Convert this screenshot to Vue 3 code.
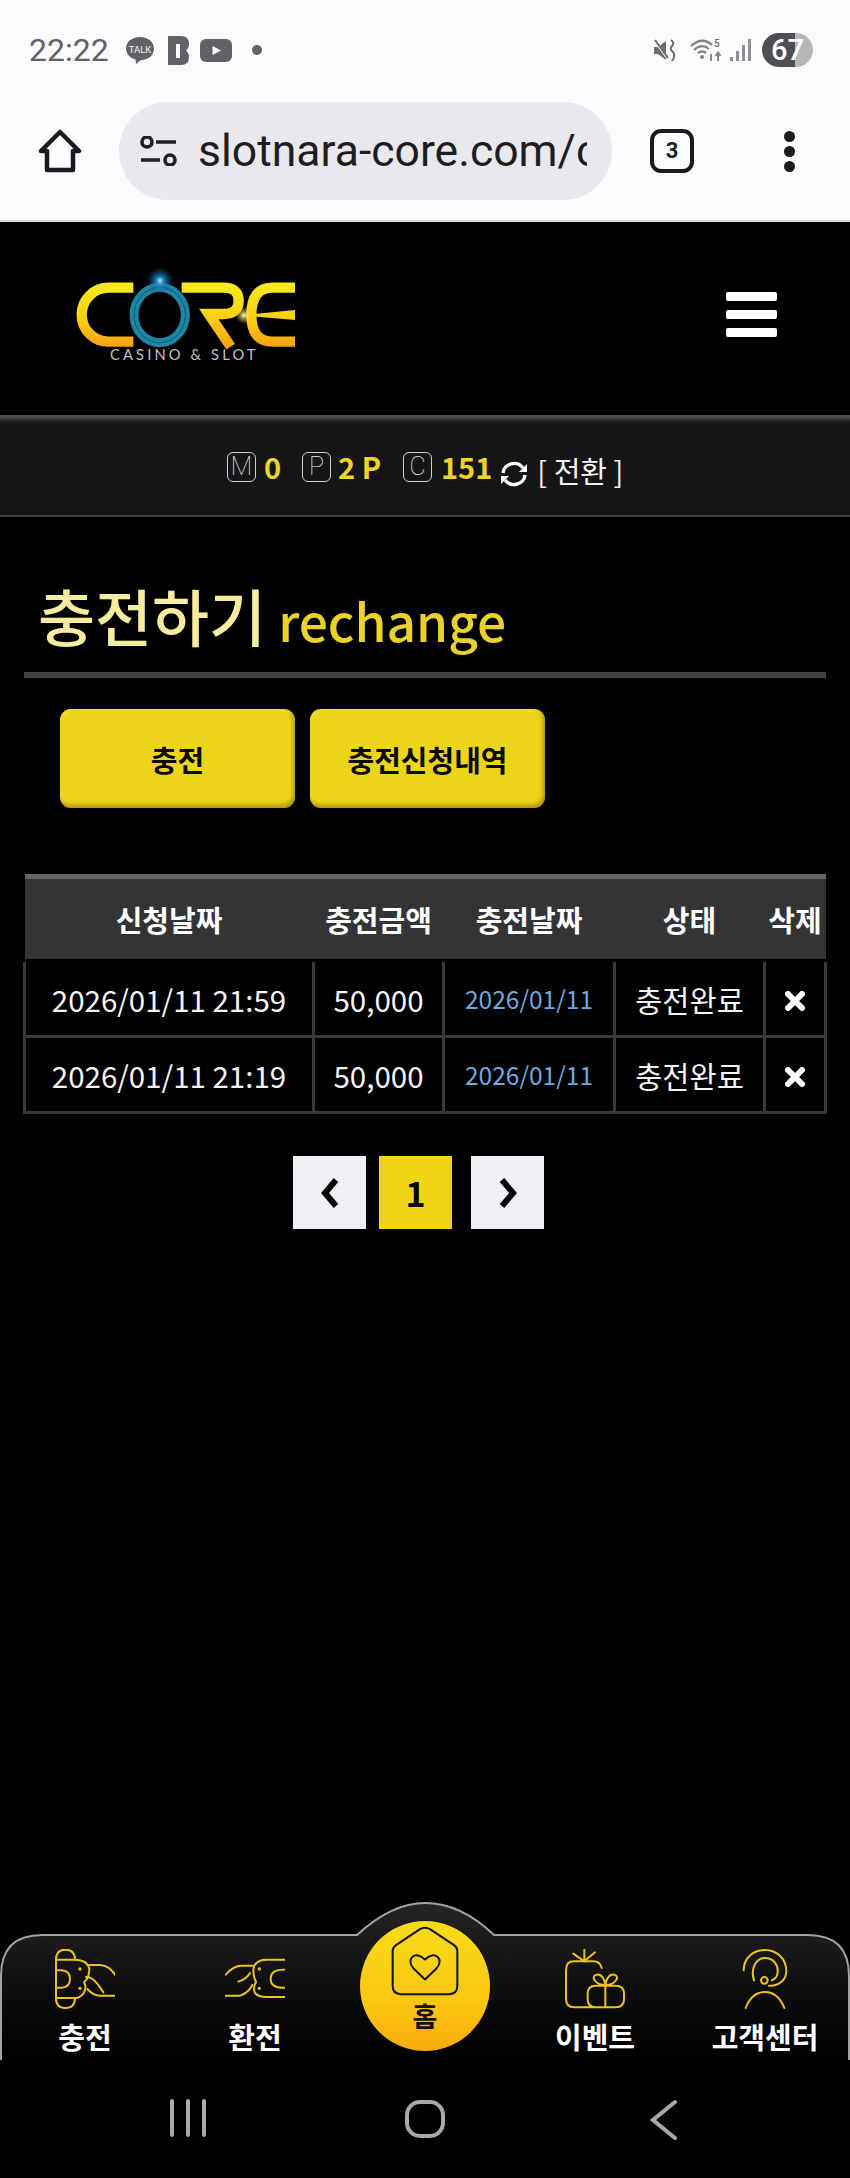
<script setup>
const rows = [
  { req: '2026/01/11 21:59', amount: '50,000', done: '2026/01/11', state: '충전완료' },
  { req: '2026/01/11 21:19', amount: '50,000', done: '2026/01/11', state: '충전완료' }
]
const heads = ['신청날짜', '충전금액', '충전날짜', '상태', '삭제']
</script>

<template>
  <div class="page">
    <div class="chrome">
      <div class="status">
        <span class="time">22:22</span>
        <svg class="st-talk" viewBox="0 0 30 30" width="30" height="30">
          <path d="M15 2C7 2 1 7 1 13.500C1 19 5 23 10.500 24.500L11 29L16 25C24 25 29 20 29 13.500C29 7 23 2 15 2Z" fill="#626266"/>
          <text x="15" y="17.500" text-anchor="middle" font-size="9.500" font-family="Roboto" fill="#f4f4f6">TALK</text>
        </svg>
        <svg class="st-b" viewBox="0 0 21 29" width="21" height="29">
          <path d="M0 0H13Q21 0 21 8Q21 12 18 14.500Q21 17 21 21Q21 29 13 29H0Z" fill="#626266"/>
          <rect x="8" y="8" width="4" height="14" fill="#fbfafd"/>
        </svg>
        <svg class="st-yt" viewBox="0 0 32 23" width="32" height="23">
          <rect width="32" height="23" rx="6" fill="#626266"/>
          <path d="M12.500 7L21 11.500L12.500 16Z" fill="#fbfafd"/>
        </svg>
        <span class="st-dot"></span>
        <span class="st-spacer"></span>
        <svg class="st-mute" viewBox="0 0 24 23" width="24" height="23">
          <path d="M1 8H5L13 2V21L5 15H1Z" fill="#6d6d71"/>
          <path d="M2 2L15 20" stroke="#fbfafd" stroke-width="2.500"/>
          <path d="M2 1L15 19" stroke="#6d6d71" stroke-width="2"/>
          <path d="M18 1Q22 4 19 7Q16 10 20 13Q23 17 19 22" stroke="#6d6d71" stroke-width="2" fill="none"/>
        </svg>
        <svg class="st-wifi" viewBox="0 0 33 24" width="33" height="24">
          <g fill="none" stroke="#818185" stroke-width="2.200">
            <path d="M1 8Q12 -2 22 7"/>
            <path d="M4 12Q12 5 19 11"/>
            <path d="M8 15Q12 12 16 15"/>
          </g>
          <circle cx="12" cy="19" r="2" fill="#818185"/>
          <text x="24" y="9" font-size="10" font-family="Roboto" font-weight="500" fill="#6d6d71">5</text>
          <path d="M21 16V23M28 23V15M25.500 18L28 14.500L30.500 18" fill="none" stroke="#8a8a8e" stroke-width="2"/>
        </svg>
        <svg class="st-signal" viewBox="0 0 22 24" width="22" height="24">
          <g fill="#8f8f93">
            <rect x="0" y="19" width="3" height="4"/>
            <rect x="6" y="13" width="3" height="10"/>
            <rect x="12" y="7" width="3" height="16"/>
            <rect x="18" y="1" width="3" height="22"/>
          </g>
        </svg>
        <span class="battery">67</span>
      </div>
      <div class="toolbar">
        <svg class="tb-home" viewBox="0 0 44 44" width="44" height="44">
          <path d="M22 3L41 22H35V41H9V22H3Z" fill="none" stroke="#1b1b1f" stroke-width="4.500" stroke-linejoin="round"/>
        </svg>
        <div class="url">
          <svg class="tune" viewBox="0 0 38 30" width="38" height="30">
            <g fill="none" stroke="#202024" stroke-width="3.600">
              <circle cx="7" cy="6" r="5"/>
              <path d="M16 6H36M1 24H20"/>
              <circle cx="30" cy="24" r="5"/>
            </g>
          </svg>
          <div class="url-text">slotnara-core.com/c</div>
        </div>
        <div class="tabs">3</div>
        <div class="dots"><i></i><i></i><i></i></div>
      </div>
    </div>

    <header class="head">
      <svg class="logo" viewBox="0 0 810 390" width="270" height="130">
        <defs>
          <linearGradient id="gold" x1="0" y1="100" x2="0" y2="290" gradientUnits="userSpaceOnUse">
            <stop offset="0" stop-color="#f8ea1e"/>
            <stop offset="0.55" stop-color="#fbcf14"/>
            <stop offset="1" stop-color="#f6a310"/>
          </linearGradient>
          <radialGradient id="flare">
            <stop offset="0" stop-color="#bff0ff"/>
            <stop offset="0.3" stop-color="#1f93d8" stop-opacity="0.8"/>
            <stop offset="1" stop-color="#0a4a88" stop-opacity="0"/>
          </radialGradient>
          <radialGradient id="spark">
            <stop offset="0" stop-color="#fff6b0"/>
            <stop offset="1" stop-color="#f8c818" stop-opacity="0"/>
          </radialGradient>
        </defs>
        <g fill="none" stroke="url(#gold)" stroke-width="31">
          <path d="M250 113H176A81 81 0 0 0 176 275H250"/>
          <path d="M395 113H520Q566 113 566 152Q566 192 520 192H476L542 290"/>
          <path d="M735 113H668Q604 113 604 195Q604 275 668 275H735"/>
        </g>
        <path d="M575 196L735 180V210Z" fill="url(#gold)"/>
        <ellipse cx="329" cy="195" rx="77" ry="83" fill="#000" stroke="#1d86a3" stroke-width="27"/>
        <ellipse cx="329" cy="195" rx="77" ry="83" fill="none" stroke="#0d4a60" stroke-width="2.500"/>
        <circle cx="330" cy="92" r="42" fill="url(#flare)"/>
        <circle cx="582" cy="196" r="26" fill="url(#spark)"/>
        <text x="403" y="331" text-anchor="middle" font-family="Lato" font-size="44" letter-spacing="9.500" fill="#c2c2c2">CASINO &amp; SLOT</text>
      </svg>
      <div class="burger"><i></i><i></i><i></i></div>
    </header>

    <div class="points">
      <span class="pbox">M</span><b class="val v0">0</b>
      <span class="pbox">P</span><b class="val v1">2 P</b>
      <span class="pbox">C</span><b class="val v2">151</b>
      <svg class="refresh" viewBox="0 0 28 26" width="28" height="26">
        <g fill="none" stroke="#fff" stroke-width="3.400">
          <path d="M3 12A11 10.500 0 0 1 23 7"/>
          <path d="M25 14A11 10.500 0 0 1 5 19"/>
        </g>
        <path d="M27 3V11H19Z" fill="#fff"/>
        <path d="M1 23V15H9Z" fill="#fff"/>
      </svg>
      <span class="swap">[ 전환 ]</span>
    </div>

    <main class="main">
      <h1 class="title">충전하기<span>rechange</span></h1>
      <div class="btns">
        <button class="btn">충전</button>
        <button class="btn">충전신청내역</button>
      </div>
      <table class="tbl">
        <colgroup>
          <col class="c1"><col class="c2"><col class="c3"><col class="c4"><col class="c5">
        </colgroup>
        <thead>
          <tr><th v-for="h in heads" :key="h">{{ h }}</th></tr>
        </thead>
        <tbody>
          <tr v-for="r in rows" :key="r.req">
            <td>{{ r.req }}</td>
            <td>{{ r.amount }}</td>
            <td class="blue">{{ r.done }}</td>
            <td>{{ r.state }}</td>
            <td>
              <svg class="x" viewBox="0 0 20 20" width="20" height="20">
                <path d="M3 3L17 17M17 3L3 17" stroke="#fff" stroke-width="6" stroke-linecap="round"/>
              </svg>
            </td>
          </tr>
        </tbody>
      </table>
      <div class="pager">
        <div class="pg">
          <svg viewBox="0 0 22 32" width="22" height="32"><path d="M17 3L6 16L17 29" fill="none" stroke="#050505" stroke-width="6"/></svg>
        </div>
        <div class="pg on">1</div>
        <div class="pg">
          <svg viewBox="0 0 22 32" width="22" height="32"><path d="M5 3L16 16L5 29" fill="none" stroke="#050505" stroke-width="6"/></svg>
        </div>
      </div>
    </main>

    <nav class="nav">
      <svg class="nav-bg" viewBox="0 0 850 160" width="850" height="160">
        <defs>
          <linearGradient id="navfill" x1="0" y1="0" x2="0" y2="1">
            <stop offset="0" stop-color="#242424"/>
            <stop offset="0.75" stop-color="#060606"/>
            <stop offset="1" stop-color="#000"/>
          </linearGradient>
        </defs>
        <path d="M1 160V76Q1 35 42 35H357C382 12 405 3 425 3C447 3 470 12 494 35H808Q849 35 849 76V160Z" fill="url(#navfill)"/>
        <path d="M1 160V76Q1 35 42 35H357C382 12 405 3 425 3C447 3 470 12 494 35H808Q849 35 849 76V160" fill="none" stroke="#a2a2a2" stroke-width="2"/>
      </svg>
      <a class="item">
        <svg viewBox="165 208 180 180" width="60" height="60" class="ico">
          <path d="M225 240Q225 210 196 210Q168 210 168 240V355Q168 385 196 385Q225 385 225 355"/>
          <path d="M168 240H225Q262 240 268 268Q268 295 252 308Q262 322 250 342Q240 355 225 355H168"/>
          <path d="M168 272H186Q210 275 210 298Q210 322 186 324H168"/>
          <path d="M262 256H300Q328 258 345 285"/>
          <path d="M258 292Q280 288 310 338"/>
          <path d="M262 328Q280 348 300 348H345"/>
          <circle cx="240" cy="268" r="5" class="dot"/>
          <circle cx="240" cy="326" r="5" class="dot"/>
        </svg>
        <span>충전</span>
      </a>
      <a class="item">
        <svg viewBox="675 208 180 180" width="60" height="60" class="ico">
          <path d="M855 240H800Q765 240 760 268Q760 292 768 306Q758 325 765 340Q775 352 800 352H855"/>
          <path d="M855 270Q812 268 812 298Q812 326 855 324"/>
          <path d="M677 285Q700 258 725 258H758"/>
          <path d="M715 306Q740 298 750 280"/>
          <path d="M677 348H720Q745 340 757 316"/>
          <circle cx="778" cy="268" r="5" class="dot"/>
          <circle cx="778" cy="326" r="5" class="dot"/>
        </svg>
        <span>환전</span>
      </a>
      <a class="item home">
        <svg viewBox="150 103 210 212" width="70" height="71" class="home-ico">
          <path d="M158 180Q158 170 168 163L240 115Q255 106 270 115L342 163Q352 170 352 180V285Q352 310 327 310H183Q158 310 158 285Z"/>
          <path d="M255 266L220 232C196 206 226 176 255 206C284 176 314 206 290 232Z"/>
        </svg>
        <span>홈</span>
      </a>
      <a class="item">
        <svg viewBox="420 208 180 180" width="60" height="60" class="ico">
          <path d="M530 265Q525 245 505 245H448Q423 245 423 270V358Q423 383 448 383H572Q597 383 597 358V342Q597 318 572 318H512Q488 318 488 342V358Q488 383 512 383"/>
          <path d="M541 318V383"/>
          <path d="M541 316C510 316 495 288 515 285C530 283 540 300 541 316C542 300 552 283 567 285C587 288 572 316 541 316Z"/>
          <path d="M478 210V245M445 222L478 245M510 218L478 245"/>
        </svg>
        <span>이벤트</span>
      </a>
      <a class="item">
        <svg viewBox="930 208 180 180" width="60" height="60" class="ico">
          <path d="M956 272C956 235 985 211 1020 211C1056 211 1084 238 1084 274C1084 302 1060 320 1032 318"/>
          <path d="M987 302C975 265 995 235 1020 235C1045 235 1060 255 1058 278C1057 290 1050 298 1040 302"/>
          <circle cx="1018" cy="302" r="10"/>
          <path d="M962 385C975 352 997 337 1020 337C1043 337 1065 352 1078 385"/>
        </svg>
        <span>고객센터</span>
      </a>
    </nav>

    <div class="sysnav">
      <svg class="sys-recent" viewBox="0 0 40 38" width="40" height="38">
        <path d="M4 2V36M20 2V36M36 2V36" stroke="#a9a9ad" stroke-width="4" stroke-linecap="round"/>
      </svg>
      <svg class="sys-home" viewBox="0 0 42 40" width="42" height="40">
        <rect x="3" y="3" width="36" height="34" rx="13" fill="none" stroke="#a9a9ad" stroke-width="4"/>
      </svg>
      <svg class="sys-back" viewBox="0 0 28 42" width="28" height="42">
        <path d="M25 3L3 21L25 39" fill="none" stroke="#a9a9ad" stroke-width="4" stroke-linecap="round"/>
      </svg>
    </div>
  </div>
</template>

<style>
html, body { margin: 0; background: #000; }
</style>

<style scoped>
.page {
  width: 850px;
  height: 2178px;
  display: flex;
  flex-direction: column;
  background: #000;
  overflow: hidden;
  font-family: "Noto Sans CJK KR", "Noto Sans", sans-serif;
  color: #fff;
}
.chrome {
  height: 220px;
  flex: none;
  background: #fbfafd;
  border-bottom: 2px solid #d9d9dc;
}
.status {
  height: 100px;
  padding: 0 37px 0 29px;
  box-sizing: border-box;
  display: flex;
  align-items: center;
}
.time {
  font: 400 32px/1 Roboto, sans-serif;
  color: #626266;
  width: 81px;
  white-space: nowrap;
}
.st-talk { margin-left: 15px; }
.st-b { margin-left: 13px; }
.st-yt { margin-left: 11px; }
.st-dot { width: 10px; height: 10px; border-radius: 50%; background: #626266; margin-left: 20px; }
.st-spacer { flex: 1; }
.st-wifi { margin-left: 13px; }
.st-signal { margin-left: 7px; }
.battery {
  margin-left: 10px;
  width: 51px;
  height: 34px;
  border-radius: 17px;
  background: linear-gradient(90deg, #4f4f53 65%, #b7b7ba 65%);
  font: 500 29px/34px Roboto, sans-serif;
  color: #fff;
  text-align: center;
}
.toolbar {
  height: 98px;
  margin-top: 2px;
  display: flex;
  align-items: center;
  padding-left: 38px;
}
.url {
  width: 493px;
  height: 98px;
  margin-left: 37px;
  border-radius: 49px;
  background: #e9e8ed;
  display: flex;
  align-items: center;
  padding-left: 21px;
  box-sizing: border-box;
}
.url-text {
  margin-left: 20px;
  width: 389px;
  overflow: hidden;
  white-space: nowrap;
  font: 400 44.500px/52px Roboto, sans-serif;
  color: #1e1e22;
}
.tabs {
  margin-left: 43px;
  width: 44px;
  height: 44px;
  box-sizing: border-box;
  border: 4.500px solid #1b1b1f;
  border-radius: 11px;
  font: 700 22px/35px Roboto, sans-serif;
  color: #1b1b1f;
  text-align: center;
}
.url { flex: none; }
.tabs { margin-left: 38px; }
.dots {
  margin-left: 90px;
  display: flex;
  flex-direction: column;
  gap: 4px;
}
.dots i { display: block; width: 11px; height: 11px; border-radius: 50%; background: #1b1b1f; }

.head {
  height: 193px;
  flex: none;
  box-sizing: border-box;
  padding: 28px 73px 0 50px;
  display: flex;
  justify-content: space-between;
  align-items: flex-start;
}
.burger { display: flex; flex-direction: column; gap: 9px; margin-top: 42px; }
.burger i { display: block; width: 51px; height: 9px; border-radius: 2px; background: #fff; }

.points {
  height: 102px;
  flex: none;
  box-sizing: border-box;
  border-bottom: 2px solid #3f3f42;
  background: linear-gradient(180deg, #58585b 0, #3a3a3c 4px, #161618 7px, #151517 100%);
  display: flex;
  align-items: flex-start;
  padding: 37px 0 0 227px;
}
.pbox {
  width: 29px;
  height: 30px;
  box-sizing: border-box;
  border: 1.500px solid #cfcfcf;
  border-radius: 6px;
  font: 100 25px/27px Roboto, sans-serif;
  color: #f0f0f0;
  text-align: center;
}
.val {
  font-size: 29px;
  font-weight: 700;
  line-height: 28px;
  color: #eed523;
  white-space: nowrap;
}
.v0 { margin-left: 8px; width: 38px; }
.v1 { margin-left: 7px; width: 65px; }
.v2 { margin-left: 9px; }
.refresh { margin: 9px 0 0 8px; }
.swap {
  margin: 0 0 0 9px;
  font-size: 29px;
  line-height: 36px;
  color: #f2f2f2;
  white-space: pre;
}

.main { flex: 1; padding: 0 24px; }
.title {
  margin: 0;
  height: 161px;
  box-sizing: border-box;
  padding: 56px 0 0 14px;
  border-bottom: 6px solid #434345;
  font-size: 62px;
  line-height: 84px;
  font-weight: 500;
  color: #f6ec9e;
  white-space: nowrap;
}
.title span { margin-left: 12px; font-size: 51.500px; font-weight: 500; color: #ebd228; }
.btns { display: flex; gap: 15px; margin: 31px 0 0 36px; }
.btn {
  width: 235px;
  height: 99px;
  padding: 0;
  border: none;
  border-radius: 11px;
  background: #ecd418;
  box-shadow: inset -2px -3px 4px rgba(120, 90, 0, 0.55), inset 2px 2px 3px rgba(255, 240, 120, 0.3);
  font-family: inherit;
  font-size: 29px;
  font-weight: 700;
  color: #0a0a0a;
}
.tbl {
  margin: 66px 0 0 -1px;
  width: 801px;
  table-layout: fixed;
  border-collapse: collapse;
}
.c1 { width: 289px; }
.c2 { width: 130px; }
.c3 { width: 171px; }
.c4 { width: 150px; }
.c5 { width: 61px; }
th {
  height: 80px;
  padding: 0;
  background: #343335;
  border-top: 5px solid #666568;
  border-bottom: 3px solid #000;
  font-size: 29px;
  font-weight: 700;
  color: #fff;
}
td {
  height: 73px;
  padding: 0;
  border: 3px solid #39393b;
  text-align: center;
  font-size: 29.500px;
  color: #f5f5f5;
  white-space: nowrap;
}
td.blue { font-size: 24.500px; color: #73a9db; }
.x { display: block; margin: 4px auto 0; }
.pager { display: flex; margin: 42px 0 0 269px; }
.pg {
  width: 73px;
  height: 73px;
  background: #f0eff3;
  display: flex;
  align-items: center;
  justify-content: center;
  color: #050505;
  font-size: 34px;
  font-weight: 700;
}
.pg.on { background: #efd514; margin: 0 19px 0 13px; }

.nav {
  position: relative;
  height: 160px;
  flex: none;
  display: grid;
  grid-template-columns: repeat(5, 170px);
}
.nav-bg { position: absolute; left: 0; top: 0; }
.item {
  position: relative;
  display: flex;
  flex-direction: column;
  align-items: center;
  padding-top: 49px;
}
.item span {
  margin-top: 10px;
  font-size: 29px;
  line-height: 34px;
  font-weight: 700;
  color: #fff;
  white-space: nowrap;
}
.ico { fill: none; stroke: #eac31e; stroke-width: 6; stroke-linecap: round; stroke-linejoin: round; }
.ico .dot { fill: #eac31e; stroke: none; }
.home {
  width: 130px;
  height: 130px;
  margin: 21px 0 0 20px;
  padding-top: 0;
  border-radius: 50%;
  background: linear-gradient(180deg, #f6dc18 0%, #fbc711 60%, #f9ab0c 100%);
}
.home-ico { margin-top: 4px; fill: none; stroke: #141414; stroke-width: 6; stroke-linejoin: round; }
.home span { margin-top: 4px; font-size: 27px; line-height: 32px; color: #141414; }

.sysnav {
  height: 118px;
  flex: none;
  box-sizing: border-box;
  display: flex;
  align-items: flex-start;
  padding: 39px 0 0 168px;
}
.sys-home { margin-left: 196px; }
.sys-back { margin-left: 204px; }
</style>
